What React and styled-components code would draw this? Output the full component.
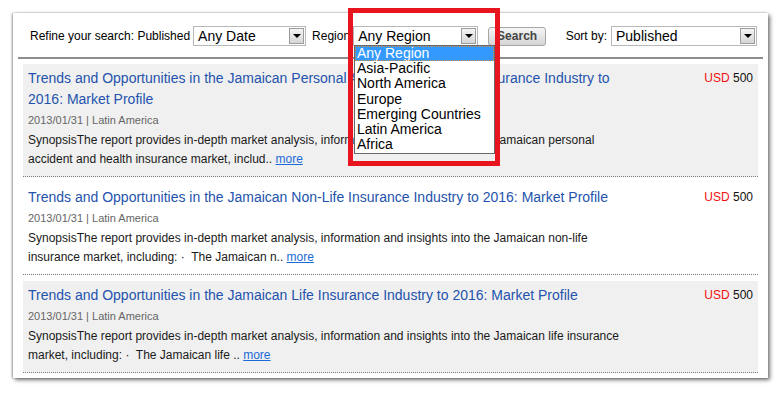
import React from 'react'
import styled, { createGlobalStyle } from 'styled-components'

const GlobalStyle = createGlobalStyle`
  body {
    margin: 0;
    background: #fff;
    font-family: "Liberation Sans", Arial, sans-serif;
    color: #000;
  }
`

const Page = styled.div`
  position: relative;
  padding: 13px;
  width: 782px;
  height: 394px;
  box-sizing: border-box;
`

const Panel = styled.div`
  width: 755px;
  box-sizing: border-box;
  background: #fff;
  padding: 0 5px 5px;
  box-shadow: 2px 2px 4px rgba(0, 0, 0, 0.55), -1px 0 2px rgba(0, 0, 0, 0.35);
`

const FilterBar = styled.div`
  display: flex;
  align-items: center;
  height: 46px;
  box-sizing: border-box;
  padding: 2px 6px 0 12px;
  border-bottom: 2px solid #8e8e8e;
  font-size: 12px;
`

const Label = styled.span`
  margin-right: ${(p) => p.$gap || 3}px;
  margin-left: ${(p) => p.$push || 0}px;
`

const Select = styled.div`
  position: relative;
  width: ${(p) => p.$width}px;
  height: 20px;
  box-sizing: border-box;
  border: 1px solid #b8b8b8;
  background: #fff;
  font-size: 14px;
  line-height: 18px;
  padding-left: 4px;
  color: #000;
`

const ArrowButton = styled.span`
  position: absolute;
  right: 1px;
  top: 1px;
  width: 15px;
  height: 16px;
  box-sizing: border-box;
  border: 1px solid #9c9c9c;
  background: linear-gradient(#f4f4f4, #d6d6d6);
  display: flex;
  align-items: center;
  justify-content: center;
  &::after {
    content: '';
    border-left: 4px solid transparent;
    border-right: 4px solid transparent;
    border-top: 4px solid #000;
  }
`

const SearchButton = styled.button`
  width: 58px;
  height: 19px;
  margin-left: 10px;
  padding: 0;
  border: 1px solid #a6a6a6;
  border-radius: 3px;
  background: linear-gradient(#f6f6f6, #d4d4d4);
  font-family: inherit;
  font-size: 12px;
  font-weight: bold;
  color: #444;
`

const SortGroup = styled.div`
  display: flex;
  align-items: center;
  margin-left: auto;
`

const ResultList = styled.div`
  padding: 5px 5px 0;
`

const Result = styled.div`
  display: flex;
  padding: 4px 5px 7px;
  background: ${(p) => (p.$shaded ? '#f0f0f0' : '#fff')};
  border-bottom: 1px dotted #7a7a7a;
  & + & {
    margin-top: 6px;
  }
`

const Body = styled.div`
  width: 605px;
`

const Title = styled.a`
  display: block;
  font-size: 14px;
  line-height: 21px;
  color: #2453ad;
  text-decoration: none;
`

const Meta = styled.div`
  font-size: 11px;
  line-height: 21px;
  color: #666;
`

const Synopsis = styled.div`
  font-size: 12px;
  line-height: 19px;
  color: #1a1a1a;
`

const More = styled.a`
  color: #1a6ad8;
  text-decoration: underline;
`

const Price = styled.div`
  margin-left: auto;
  font-size: 12px;
  line-height: 21px;
  color: #111;
  span {
    color: #f01010;
  }
`

const Listbox = styled.ul`
  position: absolute;
  left: 354px;
  top: 45px;
  width: 141px;
  margin: 0;
  padding: 0 0 1px;
  list-style: none;
  box-sizing: border-box;
  border: 1px solid #686868;
  background: #fff;
  font-size: 14px;
`

const Option = styled.li`
  height: 15.2px;
  line-height: 15px;
  padding-left: 2px;
  box-sizing: border-box;
  color: ${(p) => (p.$active ? '#fff' : '#000')};
  background: ${(p) => (p.$active ? '#3399ff' : 'transparent')};
  outline: ${(p) => (p.$active ? '1px dotted #d98c3a' : 'none')};
  outline-offset: -1px;
  white-space: nowrap;
`

const Highlight = styled.div`
  position: absolute;
  left: 348px;
  top: 8px;
  width: 152px;
  height: 158px;
  box-sizing: border-box;
  border: 5px solid #e8141e;
  pointer-events: none;
`

const regions = [
  'Any Region',
  'Asia-Pacific',
  'North America',
  'Europe',
  'Emerging Countries',
  'Latin America',
  'Africa'
]

const results = [
  {
    title:
      'Trends and Opportunities in the Jamaican Personal Accident and Health Insurance Industry to 2016: Market Profile',
    synopsis:
      'SynopsisThe report provides in-depth market analysis, information and insights into the Jamaican personal accident and health insurance market, includ.. '
  },
  {
    title:
      'Trends and Opportunities in the Jamaican Non-Life Insurance Industry to 2016: Market Profile',
    synopsis:
      'SynopsisThe report provides in-depth market analysis, information and insights into the Jamaican non-life insurance market, including: \u00b7\u00a0 The Jamaican n.. '
  },
  {
    title:
      'Trends and Opportunities in the Jamaican Life Insurance Industry to 2016: Market Profile',
    synopsis:
      'SynopsisThe report provides in-depth market analysis, information and insights into the Jamaican life insurance market, including: \u00b7\u00a0 The Jamaican life .. '
  }
]

export default function App() {
  return (
    <Page>
      <GlobalStyle />
      <Panel>
        <FilterBar>
          <Label>Refine your search: Published</Label>
          <Select $width={113}>
            Any Date
            <ArrowButton />
          </Select>
          <Label $push={6}>Region</Label>
          <Select $width={125}>
            Any Region
            <ArrowButton />
          </Select>
          <SearchButton>Search</SearchButton>
          <SortGroup>
            <Label $gap={4}>Sort by:</Label>
            <Select $width={146}>
              Published
              <ArrowButton />
            </Select>
          </SortGroup>
        </FilterBar>
        <ResultList>
          {results.map((item, index) => (
            <Result key={'result-' + index} $shaded={index % 2 === 0}>
              <Body>
                <Title href="#">{item.title}</Title>
                <Meta>2013/01/31 | Latin America</Meta>
                <Synopsis>
                  {item.synopsis}
                  <More href="#">more</More>
                </Synopsis>
              </Body>
              <Price>
                <span>USD</span> 500
              </Price>
            </Result>
          ))}
        </ResultList>
      </Panel>
      <Listbox>
        {regions.map((region, index) => (
          <Option key={region} $active={index === 0}>
            {region}
          </Option>
        ))}
      </Listbox>
      <Highlight />
    </Page>
  )
}
